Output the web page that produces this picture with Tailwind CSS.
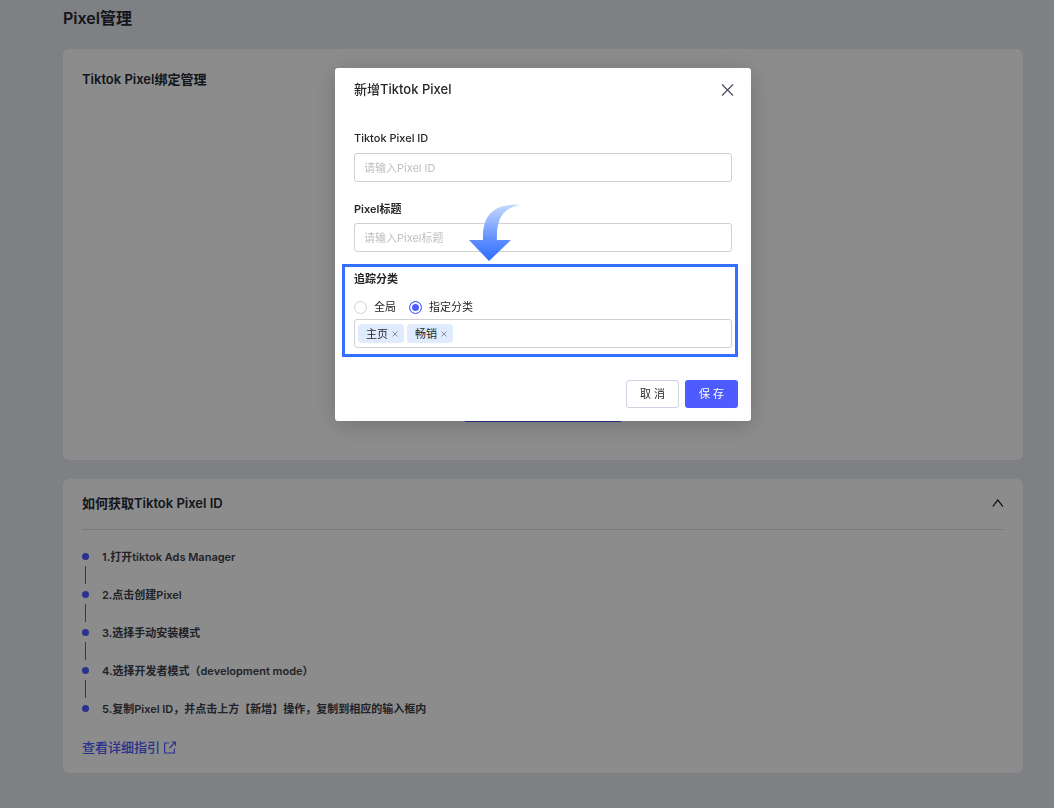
<!DOCTYPE html>
<html lang="zh-CN">

<head>
    <meta charset="UTF-8">
    <meta name="viewport" content="width=device-width, initial-scale=1.0">
    <title>Pixel管理</title>
    <script src="https://cdn.jsdelivr.net/npm/@tailwindcss/browser@4"></script>
</head>

<body class="min-h-screen bg-[#e7e9f0] font-['Inter','Noto_Sans_CJK_SC',sans-serif] text-[11px] leading-4 text-[#242833]">
    <!-- Page -->
    <main class="pl-[63px] pr-[31px] pt-1.5 pb-9">
        <h1 class="text-base leading-6 font-semibold">Pixel管理</h1>

        <section class="mt-[19px] flex h-[411px] flex-col rounded-md bg-white px-[19px] pt-5 pb-[38px]">
            <h2 class="text-[13px] leading-5 font-semibold">Tiktok Pixel绑定管理</h2>
            <button class="mx-auto mt-auto h-8 w-[158px] rounded-xs bg-[#4e5bff] text-white">新增Tiktok Pixel</button>
        </section>

        <section class="mt-[19px] rounded-md bg-white px-[19px] pt-3.5 pb-4">
            <div class="flex items-center justify-between border-b border-[#e0e0e3] pb-4">
                <h2 class="text-[13px] leading-5 font-semibold">如何获取Tiktok Pixel ID</h2>
                <button aria-label="收起">
                    <svg class="h-3 w-3" viewBox="0 0 12 12" fill="none" stroke="#000" stroke-width="1.2">
                        <path d="M.8 9.5 5.8 3 10.8 9.5" />
                    </svg>
                </button>
            </div>

            <!-- Steps -->
            <ol class="mt-[19px] font-semibold text-[#3b3e4a]">
                <li class="flex h-[38px] gap-[13px]">
                    <span class="flex w-[7px] flex-col items-center pt-1"><i class="size-[7px] rounded-full bg-[#4e5bff]"></i><i class="mt-1.5 h-[18px] w-px bg-[#4e5bff]"></i></span>
                    <span>1.打开tiktok Ads Manager</span>
                </li>
                <li class="flex h-[38px] gap-[13px]">
                    <span class="flex w-[7px] flex-col items-center pt-1"><i class="size-[7px] rounded-full bg-[#4e5bff]"></i><i class="mt-1.5 h-[18px] w-px bg-[#4e5bff]"></i></span>
                    <span>2.点击创建Pixel</span>
                </li>
                <li class="flex h-[38px] gap-[13px]">
                    <span class="flex w-[7px] flex-col items-center pt-1"><i class="size-[7px] rounded-full bg-[#4e5bff]"></i><i class="mt-1.5 h-[18px] w-px bg-[#4e5bff]"></i></span>
                    <span>3.选择手动安装模式</span>
                </li>
                <li class="flex h-[38px] gap-[13px]">
                    <span class="flex w-[7px] flex-col items-center pt-1"><i class="size-[7px] rounded-full bg-[#4e5bff]"></i><i class="mt-1.5 h-[18px] w-px bg-[#4e5bff]"></i></span>
                    <span>4.选择开发者模式（development mode）</span>
                </li>
                <li class="flex h-9 gap-[13px]">
                    <span class="flex w-[7px] flex-col items-center pt-1"><i class="size-[7px] rounded-full bg-[#4e5bff]"></i></span>
                    <span>5.复制Pixel ID，并点击上方【新增】操作，复制到相应的输入框内</span>
                </li>
            </ol>

            <a href="#" class="flex w-fit items-center gap-[3px] text-[13px] leading-5 font-medium text-[#4e5bff]">
                查看详细指引
                <svg class="h-3.5 w-3.5" viewBox="0 0 14 14" fill="none" stroke="currentColor" stroke-width="1.2">
                    <path d="M6 3H1.6V13H11.4V8.5M8.5 2H12.4V5.8M12.2 2.2 6.5 8" />
                </svg>
            </a>
        </section>
    </main>

    <!-- Modal -->
    <div class="fixed inset-0 flex items-start justify-center bg-black/45 pt-[68px] pl-[63px] pr-[31px]">
        <form role="dialog" aria-labelledby="dialog-title" class="w-full max-w-[416px] rounded-[3px] bg-white px-[19px] pt-[11px] pb-[13px] text-[#262626] shadow-[0_4px_24px_rgba(0,0,0,0.2)]">
            <div class="-mr-1 flex items-center justify-between">
                <h2 id="dialog-title" class="text-[13px] leading-5 font-medium">新增Tiktok Pixel</h2>
                <button type="button" aria-label="关闭" class="pt-0.5">
                    <svg class="h-4 w-4" viewBox="0 0 16 16" fill="none" stroke="#4a4d5e" stroke-width="1.2">
                        <path d="M2 2.5 13 13.5M13 2.5 2 13.5" />
                    </svg>
                </button>
            </div>

            <div class="mt-[31px]">
                <label for="pixel-id" class="block font-medium">Tiktok Pixel ID</label>
                <input id="pixel-id" type="text" placeholder="请输入Pixel ID"
                    class="mt-[7px] block h-[29px] w-full rounded-[3px] border border-[#d0d0d3] px-[9px] placeholder:text-[#bfbfbf] focus:outline-none">
            </div>

            <div class="relative mt-[19px]">
                <label for="pixel-title" class="block font-semibold">Pixel标题</label>
                <input id="pixel-title" type="text" placeholder="请输入Pixel标题"
                    class="mt-1.5 block h-[29px] w-full rounded-[3px] border border-[#d0d0d3] px-[9px] placeholder:text-[#bfbfbf] focus:outline-none">
                <svg class="absolute top-[3px] left-[115px] h-[57px] w-[52px]" viewBox="0 0 52 57">
                    <defs>
                        <linearGradient id="arrow" x1="0" y1="0" x2="0" y2="1">
                            <stop offset="0" stop-color="#c4d8ff" />
                            <stop offset="0.65" stop-color="#5b8cff" />
                            <stop offset="1" stop-color="#2f6bff" />
                        </linearGradient>
                    </defs>
                    <path fill="url(#arrow)" d="M51 1C26-1 13 10 14 36H0L20 57 42 36H28C27 16 33 4 51 1Z" />
                </svg>
            </div>

            <!-- Highlighted category field -->
            <fieldset class="-mr-1.5 -ml-3 mt-3 border-3 border-[#3470ff] pt-1 pr-[3px] pb-1.5 pl-[9px]">
                <legend class="float-left w-full font-semibold">追踪分类</legend>
                <div class="clear-left flex items-center gap-[13px] pt-3">
                    <label class="flex items-center gap-[7px]">
                        <input type="radio" name="scope"
                            class="size-[13px] appearance-none rounded-full border border-[#d0d0d3] checked:border-[#4e5bff] checked:bg-[#4e5bff] checked:shadow-[inset_0_0_0_2px_white]">
                        全局
                    </label>
                    <label class="flex items-center gap-[7px]">
                        <input type="radio" name="scope" checked
                            class="size-[13px] appearance-none rounded-full border border-[#d0d0d3] checked:border-[#4e5bff] checked:bg-[#4e5bff] checked:shadow-[inset_0_0_0_2px_white]">
                        指定分类
                    </label>
                </div>
                <div class="mt-1 flex h-[29px] items-center gap-[3px] rounded-[3px] border border-[#d0d0d3] px-[3px]">
                    <span class="flex h-[19px] items-center gap-1 rounded-sm bg-[#e0ebfd] pr-1.5 pl-2">主页
                        <button type="button" aria-label="移除主页">
                            <svg class="h-1.5 w-1.5" viewBox="0 0 6 6" stroke="#8c8f9c"><path d="M.5.5 5.5 5.5M5.5.5.5 5.5" /></svg>
                        </button>
                    </span>
                    <span class="flex h-[19px] items-center gap-1 rounded-sm bg-[#e0ebfd] pr-1.5 pl-2">畅销
                        <button type="button" aria-label="移除畅销">
                            <svg class="h-1.5 w-1.5" viewBox="0 0 6 6" stroke="#8c8f9c"><path d="M.5.5 5.5 5.5M5.5.5.5 5.5" /></svg>
                        </button>
                    </span>
                </div>
            </fieldset>

            <div class="-mr-1.5 mt-[23px] flex justify-end gap-1.5">
                <button type="button" class="h-7 w-[53px] rounded-[3px] border border-[#d0d1e2]">取 消</button>
                <button type="submit" class="h-7 w-[53px] rounded-[3px] bg-[#4e5bff] text-white">保 存</button>
            </div>
        </form>
    </div>
</body>

</html>
